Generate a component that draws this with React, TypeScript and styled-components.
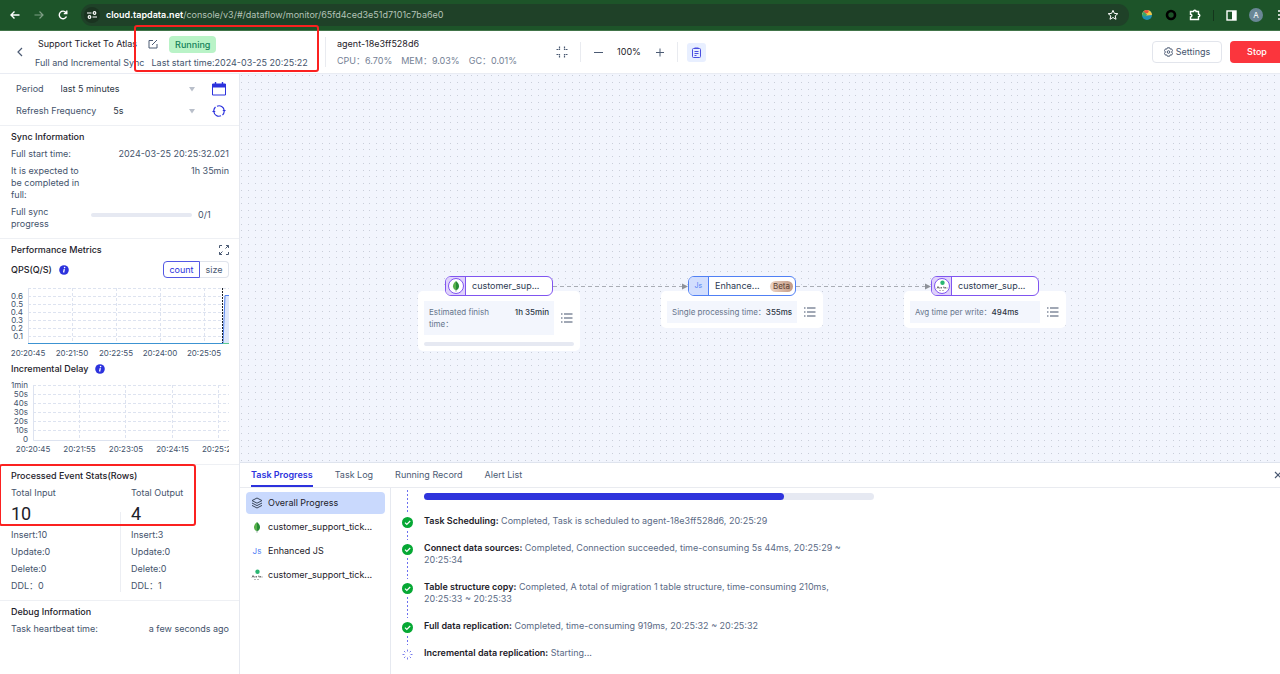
import React from "react";
import styled, { createGlobalStyle, css } from "styled-components";

const Global = createGlobalStyle`
  * { box-sizing: border-box; }
  body { margin: 0; background: #fff; }
  body, button, select, input {
    font-family: Inter, "Noto Sans CJK SC", sans-serif;
    font-size: 9px;
    line-height: 12px;
    color: #44536c;
  }
  button { margin: 0; padding: 0; border: 0; background: none; cursor: pointer; }
  svg { display: block; flex: none; }
  p, h1, h2, h3, ul, ol, dl, dd { margin: 0; padding: 0; list-style: none; font-size: inherit; font-weight: inherit; }
`;

const Page = styled.div`
  position: relative;
  min-height: 100vh;
  display: flex;
  flex-direction: column;
  overflow: hidden;
`;

/* Browser bar */
const BrowserBar = styled.div`
  height: 31px;
  display: flex;
  align-items: center;
  padding-left: 9px;
  background: #1d5429;
  border-bottom: 1px solid #417449;
  color: #fff;
  overflow: hidden;
`;
const NavButtons = styled.div`
  display: flex;
  gap: 12px;
  margin-right: 12px;
`;
const BarButton = styled.button<{ $dim?: boolean }>`
  display: flex;
  color: ${(p) => (p.$dim ? "#7f9f86" : "#fff")};
`;
const AddressBar = styled.div`
  flex: 1;
  height: 22px;
  display: flex;
  align-items: center;
  gap: 6px;
  padding: 0 10px 0 3px;
  border-radius: 11px;
  background: #1f4128;
`;
const SiteButton = styled.button`
  width: 16px;
  height: 16px;
  display: flex;
  align-items: center;
  justify-content: center;
  border-radius: 8px;
  background: #1a3320;
`;
const Url = styled.div`
  flex: 1;
  color: #b4c3b7;
  span { color: #fff; font-weight: 600; }
`;
const BarActions = styled.div`
  display: flex;
  align-items: center;
  gap: 12px;
  margin: 0 -7px 0 12px;
`;
const BarRule = styled.span`
  width: 1px;
  height: 11px;
  background: #14361c;
`;
const Avatar = styled.span`
  width: 14px;
  height: 14px;
  border-radius: 7px;
  background: #6a8796;
  color: #fff;
  font-size: 8px;
  line-height: 14px;
  text-align: center;
`;

/* Task header */
const Header = styled.header`
  height: 43px;
  display: flex;
  align-items: center;
  border-bottom: 1px solid #e9ecf3;
  overflow: hidden;
`;
const BackButton = styled.button`
  width: 35px;
  display: flex;
  padding-left: 16px;
`;
const TaskInfo = styled.div`
  width: 290px;
  flex: none;
  display: flex;
  flex-direction: column;
  gap: 4px;
`;
const TitleRow = styled.div`
  display: flex;
  align-items: center;
  gap: 11px;
  padding-left: 3px;
  color: #1d2129;
`;
const StatusTag = styled.span`
  padding: 2px 6px;
  line-height: 13px;
  border-radius: 4px;
  background: #b9f3c7;
  color: #158259;
  font-weight: 500;
`;
const MetaRow = styled.div`
  display: flex;
  gap: 7px;
  white-space: nowrap;
`;
const Rule = styled.span<{ $tall?: boolean }>`
  width: 1px;
  height: ${(p) => (p.$tall ? 30 : 20)}px;
  background: #e9ebf0;
`;
const Agent = styled.div`
  width: 230px;
  padding-left: 11px;
  display: flex;
  flex-direction: column;
  gap: 5px;
  color: #1d2129;
`;
const AgentStats = styled.div`
  display: flex;
  gap: 9px;
  color: #748195;
`;
const ZoomTools = styled.div`
  display: flex;
  align-items: center;
  gap: 12px;
  color: #1d2129;
`;
const ZoomValue = styled.span`
  width: 28px;
  text-align: center;
`;
const ToolButton = styled.button<{ $active?: boolean }>`
  display: flex;
  align-items: center;
  justify-content: center;
  color: #4b5a73;
  ${(p) => p.$active && css`
    width: 19px;
    height: 19px;
    margin-left: -3px;
    border-radius: 3px;
    background: #e8efff;
    color: #4a4fe0;
  `}
`;
const HeaderActions = styled.div`
  display: flex;
  gap: 8px;
  margin: 0 -4px 0 auto;
`;
const ActionButton = styled.button<{ $danger?: boolean }>`
  height: 22px;
  display: flex;
  align-items: center;
  justify-content: center;
  gap: 3px;
  border-radius: 4px;
  ${(p) => p.$danger
    ? css`width: 54px; background: #fb353d; color: #fff; font-weight: 500;`
    : css`width: 70px; border: 1px solid #e2e5ec;`}
`;

/* Sidebar */
const Body = styled.div`
  flex: 1;
  display: flex;
`;
const Sidebar = styled.aside`
  width: 240px;
  flex: none;
  border-right: 1px solid #e6e9f0;
`;
const Section = styled.section`
  padding: 5px 10px 8px 11px;
  border-top: 1px solid #eef0f4;
`;
const Filters = styled.div`
  display: flex;
  flex-direction: column;
  gap: 8px;
  padding: 8px 13px 7px 16px;
`;
const FilterRow = styled.div`
  display: flex;
  align-items: center;
  height: 14px;
  gap: 17px;
`;
const SelectBox = styled.div`
  flex: 1;
  display: flex;
  align-items: center;
  select {
    flex: 1;
    appearance: none;
    border: 0;
    padding: 0;
    background: none;
    color: #2c3544;
  }
`;
const IconButton = styled.button`
  display: flex;
  color: #2c32dd;
`;
const Heading = styled.h2`
  color: #1d2129;
  font-weight: 500;
`;
const HeadRow = styled.div`
  display: flex;
  align-items: center;
  justify-content: space-between;
`;
const InfoRow = styled.div`
  display: flex;
  justify-content: space-between;
  margin-top: 5px;
`;
const InfoLabel = styled.span<{ $narrow?: boolean }>`
  flex: none;
  width: ${(p) => (p.$narrow ? "74px" : "auto")};
`;
const SyncProgress = styled.div`
  width: 138px;
  height: 12px;
  display: flex;
  align-items: center;
  gap: 6px;
  margin-top: 3px;
`;
const Track = styled.div<{ $w?: number; $h: number }>`
  width: ${(p) => (p.$w ? `${p.$w}px` : "100%")};
  height: ${(p) => p.$h}px;
  border-radius: 4px;
  background: #e6e9f2;
`;
const Fill = styled.div`
  width: 80%;
  height: 100%;
  border-radius: 4px;
  background: #2f34dc;
`;
const ChartHead = styled.div<{ $gap?: boolean }>`
  display: flex;
  align-items: center;
  gap: 7px;
  height: 17px;
  margin-top: ${(p) => (p.$gap ? 5 : 0)}px;
  color: #1d2129;
  font-weight: 500;
`;
const Segmented = styled.div`
  display: flex;
  margin-left: auto;
`;
const Segment = styled.button<{ $on?: boolean }>`
  height: 17px;
  width: ${(p) => (p.$on ? 37 : 29)}px;
  border: 1px solid ${(p) => (p.$on ? "#5358e4" : "#e0e4ec")};
  border-radius: ${(p) => (p.$on ? "4px 0 0 4px" : "0 4px 4px 0")};
  border-left-width: ${(p) => (p.$on ? 1 : 0)}px;
  color: ${(p) => (p.$on ? "#2c32dd" : "#4b5a73")};
`;
const Chart = styled.svg`
  width: 100%;
  font-size: 8px;
  fill: #44536c;
`;
const Stats = styled.div`
  display: grid;
  grid-template-columns: 109px 11px 1fr;
  margin-top: 5px;
`;
const StatColumn = styled.div`
  display: flex;
  flex-direction: column;
  gap: 5px;
`;
const StatTotal = styled.strong`
  font-family: Roboto, sans-serif;
  font-size: 18px;
  line-height: 20px;
  font-weight: 400;
  color: #1d2129;
`;
const StatRule = styled.span`
  width: 1px;
  height: 80px;
  align-self: end;
  background: #eceef3;
`;

/* Canvas */
const Main = styled.main`
  flex: 1;
  min-width: 0;
  display: flex;
  flex-direction: column;
`;
const Canvas = styled.div`
  position: relative;
  flex: 1;
  min-height: 300px;
  background: #f2f5fd;
  overflow: hidden;
`;
const CanvasLayer = styled.svg`
  position: absolute;
  inset: 0;
  width: 100%;
  height: 100%;
`;
const Node = styled.div<{ $x: number }>`
  position: absolute;
  left: ${(p) => p.$x}px;
  top: 202px;
  width: 162px;
  display: flex;
  flex-direction: column;
  align-items: center;
`;
const NodePill = styled.div<{ $blue?: boolean }>`
  position: relative;
  z-index: 1;
  width: 108px;
  height: 20px;
  display: flex;
  align-items: center;
  border: 1px solid ${(p) => (p.$blue ? "#5080f5" : "#8055f0")};
  border-radius: 6px;
  background: #fff;
  overflow: hidden;
`;
const NodeIcon = styled.span<{ $blue?: boolean }>`
  width: 20px;
  height: 100%;
  display: flex;
  align-items: center;
  justify-content: center;
  border-right: 1px solid ${(p) => (p.$blue ? "#5080f5" : "#8055f0")};
  background: ${(p) => (p.$blue ? "#d2defd" : "#dfd2fb")};
`;
const NodeName = styled.span`
  padding-left: 6px;
  flex: 1;
  color: #2c3a52;
`;
const Beta = styled.span`
  margin-right: 2px;
  padding: 0 3px;
  border-radius: 6px;
  font-size: 8px;
  line-height: 11px;
  color: #5c4033;
  background: linear-gradient(90deg, #ecd3c3, #c39a85);
`;
const NodeCard = styled.div`
  width: 100%;
  margin-top: -5px;
  padding: 10px 6px 5px;
  display: flex;
  flex-direction: column;
  gap: 7px;
  border-radius: 5px;
  background: #fff;
`;
const NodeCardRow = styled.div`
  display: flex;
  align-items: center;
  gap: 7px;
`;
const Metric = styled.div<{ $split?: boolean }>`
  width: 130px;
  flex: none;
  padding: 5px;
  display: flex;
  justify-content: ${(p) => (p.$split ? "space-between" : "flex-start")};
  font-size: 8px;
  color: #66758c;
  background: #f3f6fd;
  span {
    width: ${(p) => (p.$split ? "70px" : "auto")};
    white-space: ${(p) => (p.$split ? "normal" : "nowrap")};
  }
  b { white-space: nowrap; font-weight: 500; color: #2c3544; }
`;

/* Bottom panel */
const Panel = styled.section`
  border-top: 1px solid #dfe4ee;
`;
const Tabs = styled.nav`
  display: flex;
  align-items: stretch;
  gap: 22px;
  height: 25px;
  padding-left: 11px;
  border-bottom: 1px solid #e9ebf0;
  overflow: hidden;
`;
const Tab = styled.button<{ $on?: boolean }>`
  padding-top: 2px;
  border-bottom: 2px solid ${(p) => (p.$on ? "#2c32dd" : "transparent")};
  color: ${(p) => (p.$on ? "#2c32dd" : "#4b5a73")};
  font-weight: ${(p) => (p.$on ? 600 : 400)};
`;
const CloseButton = styled.button`
  display: flex;
  align-items: center;
  margin: 0 -2px 0 auto;
`;
const PanelBody = styled.div`
  display: flex;
`;
const StepList = styled.ul`
  width: 151px;
  flex: none;
  display: flex;
  flex-direction: column;
  gap: 2px;
  padding: 4px 5px 4px 6px;
  border-right: 1px solid #e6e9f0;
`;
const StepButton = styled.button<{ $on?: boolean }>`
  width: 100%;
  height: 22px;
  display: flex;
  align-items: center;
  gap: 5px;
  padding-left: 5px;
  border-radius: 4px;
  color: #1d2129;
  background: ${(p) => (p.$on ? "#c9d9fd" : "transparent")};
  white-space: nowrap;
`;
const Timeline = styled.ol`
  flex: 1;
  padding-left: 11px;
`;
const TimelineItem = styled.li`
  display: flex;
  gap: 11px;
  color: #5a6a85;
  b { color: #1d2129; font-weight: 600; }
`;
const Marker = styled.div`
  width: 11px;
  display: flex;
  flex-direction: column;
  align-items: center;
  gap: 3px;
  padding-top: 2px;
  flex: none;
`;
const Dots = styled.span`
  flex: 1;
  width: 1px;
  margin-bottom: 2px;
  background: repeating-linear-gradient(#6c70f0 0 2px, #fff 2px 4px);
`;
const TimelineText = styled.p`
  width: 440px;
  padding-bottom: 15px;
`;
const BarHolder = styled.div`
  width: 450px;
  padding: 5px 0 15px;
`;

/* Red callouts over the page */
const Callout = styled.div<{ $x: number; $y: number; $w: number; $h: number }>`
  position: absolute;
  left: ${(p) => p.$x}px;
  top: ${(p) => p.$y}px;
  width: ${(p) => p.$w}px;
  height: ${(p) => p.$h}px;
  border: 2px solid #fb2120;
  border-radius: 3px;
  pointer-events: none;
  z-index: 5;
`;

const Leaf = () => (
  <svg width="12" height="12" viewBox="0 0 12 12">
    <path d="M6 1C3.600 3 3 4.700 3 6.300 3 8.500 4.500 9.700 6 10.600z" fill="#58b04b" />
    <path d="M6 1c2.400 2 3 3.700 3 5.300 0 2.200-1.500 3.400-3 4.300z" fill="#268b35" />
    <path d="M6 9.500V12" stroke="#9aa" strokeWidth=".7" />
  </svg>
);
const Atlas = () => (
  <svg width="12" height="12" viewBox="0 0 12 12">
    <circle cx="6.500" cy="2.700" r="2.200" fill="#2bb673" />
    <path d="M1 8.500l1-2 1 2M4 7v1.500M5.500 7v1.500M7 7.200h1.300v1.300M9.500 7v1.500M11 7.500v1" stroke="#555" strokeWidth=".8" fill="none" />
    <path d="M3 10.500h6" stroke="#999" strokeWidth=".7" strokeDasharray="2 1" />
  </svg>
);
const RoundIcon = styled.span`
  width: 16px;
  height: 16px;
  display: flex;
  align-items: center;
  justify-content: center;
  border: 1px solid #8055f0;
  border-radius: 8px;
  background: #fff;
`;
const JsMark = styled.span<{ $small?: boolean }>`
  width: ${(p) => (p.$small ? 8 : 12)}px;
  font-size: ${(p) => (p.$small ? 7 : 8)}px;
  color: #5080f5;
`;
const Info = () => (
  <svg width="10" height="10" viewBox="0 0 10 10">
    <circle cx="5" cy="5" r="4.800" fill="#2c32dd" />
    <path d="M5.300 4.200L4.600 7.500" stroke="#fff" strokeWidth="1.300" />
    <circle cx="5.600" cy="2.600" r=".8" fill="#fff" />
  </svg>
);
const Caret = () => (
  <svg width="6" height="5" viewBox="0 0 6 5"><path d="M0 0h6L3 4.500z" fill="#b9bfca" /></svg>
);
const ListIcon = () => (
  <svg width="12" height="10" viewBox="0 0 12 10" stroke="#44536c" strokeWidth="1.200">
    <path d="M0 1h1.500M3 1h8.500M0 5h1.500M3 5h8.500M0 9h1.500M3 9h8.500" />
  </svg>
);
const Check = () => (
  <svg width="11" height="11" viewBox="0 0 11 11">
    <circle cx="5.500" cy="5.500" r="5.500" fill="#06a834" />
    <path d="M3 5.600l1.800 1.800L8.200 4" fill="none" stroke="#fff" strokeWidth="1.200" />
  </svg>
);
const Spinner = () => (
  <svg width="11" height="11" viewBox="0 0 11 11" stroke="#7a7eec" strokeWidth="1">
    <path d="M5.500 .5v2M5.500 8.500v2M.5 5.500h2M8.500 5.500h2M2 2l1.300 1.300M7.700 7.700L9 9M9 2L7.700 3.300M3.300 7.700L2 9" />
  </svg>
);

const qpsTicks = ["0.6", "0.5", "0.4", "0.3", "0.2", "0.1"];
const qpsTimes = ["20:20:45", "20:21:50", "20:22:55", "20:24:00", "20:25:05"];
const delayTicks = ["1min", "50s", "40s", "30s", "20s", "10s", "0"];
const delayTimes = ["20:20:45", "20:21:55", "20:23:05", "20:24:15", "20:25:25"];

const QpsChart = () => (
  <Chart height="82" role="img" aria-label="QPS">
    <g stroke="#dde3f0" strokeDasharray="3 2">
      <path d="M17 10.500H218" />
      {qpsTicks.map((t, i) => <path key={t} d={`M17 ${18.5 + i * 8}H218`} />)}
      {[1, 2, 3, 4].map((i) => <path key={i} d={`M${17.5 + i * 44} 10V65`} />)}
    </g>
    <path d="M17.500 10V65" stroke="#dde3f0" />
    <path d="M212 65L214 17.500H218V65z" fill="#dfe8fc" />
    <path d="M212 65L214 17.500H218" fill="none" stroke="#4f80ee" />
    <path d="M17 65.500H212" stroke="#3c93d2" />
    <path d="M212 65.500H218" stroke="#5ccb92" />
    <path d="M211.500 10V65" stroke="#1d2129" strokeDasharray="2 1" />
    {qpsTicks.map((t, i) => <text key={t} x="12" y={21 + i * 8} textAnchor="end">{t}</text>)}
    {qpsTimes.map((t, i) => <text key={t} x={17 + i * 44} y="78" textAnchor="middle">{t}</text>)}
  </Chart>
);
const DelayChart = () => (
  <Chart height="79" role="img" aria-label="Incremental delay">
    <g stroke="#dde3f0" strokeDasharray="3 2">
      {delayTicks.slice(0, 6).map((t, i) => <path key={t} d={`M22 ${8.5 + i * 9}H218`} />)}
      {[68.5, 114.5, 161.5, 207.5].map((x) => <path key={x} d={`M${x} 8V63`} />)}
    </g>
    <path d="M22.500 8V63.500H218" fill="none" stroke="#dde3f0" />
    {delayTicks.map((t, i) => <text key={t} x="17" y={11 + i * 9} textAnchor="end">{t}</text>)}
    {delayTimes.map((t, i) => <text key={t} x={22 + i * 46.5} y="75" textAnchor="middle">{t}</text>)}
  </Chart>
);

const stats = [
  { title: "Total Input", total: "10", rows: ["Insert:10", "Update:0", "Delete:0", "DDL：0"] },
  { title: "Total Output", total: "4", rows: ["Insert:3", "Update:0", "Delete:0", "DDL：1"] },
];
const steps = [
  { title: "Task Scheduling:", text: "Completed, Task is scheduled to agent-18e3ff528d6, 20:25:29" },
  { title: "Connect data sources:", text: "Completed, Connection succeeded, time-consuming 5s 44ms, 20:25:29 ~ 20:25:34" },
  { title: "Table structure copy:", text: "Completed, A total of migration 1 table structure, time-consuming 210ms, 20:25:33 ~ 20:25:33" },
  { title: "Full data replication:", text: "Completed, time-consuming 919ms, 20:25:32 ~ 20:25:32" },
];

export default function App() {
  return (
    <Page>
      <Global />
      <BrowserBar>
        <NavButtons>
          <BarButton aria-label="Back">
            <svg width="12" height="12" viewBox="0 0 12 12" fill="none" stroke="currentColor" strokeWidth="1.400"><path d="M10.500 6H2M5.500 2.500L2 6l3.500 3.500" /></svg>
          </BarButton>
          <BarButton $dim aria-label="Forward">
            <svg width="12" height="12" viewBox="0 0 12 12" fill="none" stroke="currentColor" strokeWidth="1.200"><path d="M1.500 6H10M6.500 2.500L10 6 6.500 9.500" /></svg>
          </BarButton>
          <BarButton aria-label="Reload">
            <svg width="12" height="12" viewBox="0 0 12 12" fill="none" stroke="currentColor" strokeWidth="1.400"><path d="M9.500 7.500A3.800 3.800 0 1 1 9 3.500M9.800 1.500V4.500H6.800" /></svg>
          </BarButton>
        </NavButtons>
        <AddressBar>
          <SiteButton aria-label="Site information">
            <svg width="10" height="8" viewBox="0 0 10 8" fill="none" stroke="#fff" strokeWidth="1.200"><path d="M0 2h4.500M5.500 6H10" /><circle cx="7.500" cy="2" r="1.300" /><circle cx="2.500" cy="6" r="1.300" /></svg>
          </SiteButton>
          <Url><span>cloud.tapdata.net</span>/console/v3/#/dataflow/monitor/65fd4ced3e51d7101c7ba6e0</Url>
          <BarButton aria-label="Bookmark">
            <svg width="12" height="12" viewBox="0 0 12 12" fill="none" stroke="currentColor"><path d="M6 1.300l1.400 3.100 3.400.3-2.600 2.200.8 3.400L6 8.500l-3 1.800.8-3.400L1.200 4.700l3.400-.3z" /></svg>
          </BarButton>
        </AddressBar>
        <BarActions>
          <svg width="12" height="12" viewBox="0 0 12 12"><circle cx="6" cy="6" r="5" fill="#1f8fb3" /><path d="M1 6a5 5 0 0 1 10 0L6 6.500z" fill="#f2c744" /><path d="M2.500 2.400A5 5 0 0 1 8 1.400L7 4 4 4.500z" fill="#e8553c" /><path d="M1 6l1.500-3.600L6 5.500 4 8z" fill="#3aa66a" /></svg>
          <svg width="12" height="12" viewBox="0 0 12 12"><circle cx="6" cy="6" r="4" fill="none" stroke="#000" strokeWidth="2.600" /></svg>
          <BarButton aria-label="Extensions">
            <svg width="12" height="12" viewBox="0 0 12 12" fill="none" stroke="currentColor" strokeWidth="1.400"><path d="M1.500 2.500h3a1.300 1.300 0 0 1 2.600 0h2.400v2.700a1.300 1.300 0 0 1 0 2.600v2.700h-8V8a1.400 1.400 0 0 0 0-2.800z" /></svg>
          </BarButton>
          <BarRule />
          <BarButton aria-label="Side panel">
            <svg width="11" height="11" viewBox="0 0 11 11"><rect x="1" y="1" width="9" height="9" fill="none" stroke="#fff" strokeWidth="1.400" /><path d="M6 1h4v9H6z" fill="#fff" /></svg>
          </BarButton>
          <Avatar>A</Avatar>
          <BarButton aria-label="Menu">
            <svg width="12" height="12" viewBox="0 0 12 12" fill="currentColor"><circle cx="4" cy="2" r="1" /><circle cx="4" cy="6" r="1" /><circle cx="4" cy="10" r="1" /></svg>
          </BarButton>
        </BarActions>
      </BrowserBar>

      <Header>
        <BackButton aria-label="Go back">
          <svg width="8" height="10" viewBox="0 0 8 10" fill="none" stroke="#4b5a73" strokeWidth="1.200"><path d="M6 1L2 5l4 4" /></svg>
        </BackButton>
        <TaskInfo>
          <TitleRow>
            <h1>Support Ticket To Atlas</h1>
            <IconButton aria-label="Rename">
              <svg width="10" height="10" viewBox="0 0 10 10" fill="none" stroke="#4b5a73"><path d="M5 1.500H1v7.500h8V5M4 6l5-5" /></svg>
            </IconButton>
            <StatusTag>Running</StatusTag>
          </TitleRow>
          <MetaRow><span>Full and Incremental Sync</span><span>Last start time:2024-03-25 20:25:22</span></MetaRow>
        </TaskInfo>
        <Rule $tall />
        <Agent>
          <span>agent-18e3ff528d6</span>
          <AgentStats><span>CPU：6.70%</span><span>MEM：9.03%</span><span>GC：0.01%</span></AgentStats>
        </Agent>
        <ZoomTools>
          <ToolButton aria-label="Fit to screen">
            <svg width="12" height="12" viewBox="0 0 12 12" fill="none" stroke="currentColor" strokeWidth="1.200"><path d="M.5 3.500H2M3.500 .5V2M3.500 2.500v1H2.500M11.500 3.500H10M8.500 .5V2M8.500 2.500v1h1M11.500 8.500H10M8.500 11.500V10M8.500 9.500v-1h1M.5 8.500H2M3.500 11.500V10M3.500 9.500v-1h-1" /></svg>
          </ToolButton>
          <Rule />
          <ToolButton aria-label="Zoom out"><svg width="10" height="10" viewBox="0 0 10 10" stroke="currentColor"><path d="M1 5.500h9" /></svg></ToolButton>
          <ZoomValue>100%</ZoomValue>
          <ToolButton aria-label="Zoom in"><svg width="10" height="10" viewBox="0 0 10 10" stroke="currentColor"><path d="M1 5.500h8M5 1.500v8" /></svg></ToolButton>
          <Rule />
          <ToolButton $active aria-label="Task details">
            <svg width="11" height="11" viewBox="0 0 11 11" fill="none" stroke="currentColor"><rect x="1.500" y="1.500" width="8" height="9" rx="1" /><path d="M3.500 1h4M3.500 4.500h4M3.500 6.500h4M3.500 8.500h2" /></svg>
          </ToolButton>
        </ZoomTools>
        <HeaderActions>
          <ActionButton>
            <svg width="9" height="10" viewBox="0 0 9 10" fill="none" stroke="#4b5a73"><path d="M3.300.8h2.400l.5 1.300 1.400-.2.900 1.700L7.600 5l.9 1.400-.9 1.700-1.400-.2-.5 1.300H3.300l-.5-1.300-1.400.2L.5 6.400 1.400 5 .5 3.600l.9-1.700 1.400.2z" /><circle cx="4.500" cy="5" r="1.300" /></svg>
            Settings
          </ActionButton>
          <ActionButton $danger>Stop</ActionButton>
        </HeaderActions>
      </Header>

      <Body>
        <Sidebar>
          <Filters>
            <FilterRow>
              <label htmlFor="period">Period</label>
              <SelectBox><select id="period"><option>last 5 minutes</option></select><Caret /></SelectBox>
              <IconButton aria-label="Pick dates">
                <svg width="14" height="14" viewBox="0 0 14 14"><path d="M.5 2h13v11h-13z" fill="none" stroke="currentColor" /><path d="M.5 2h13v3.500H.5z" fill="currentColor" /><path d="M3.500 0v3M10.500 0v3" stroke="currentColor" strokeWidth="1.400" /></svg>
              </IconButton>
            </FilterRow>
            <FilterRow>
              <label htmlFor="frequency">Refresh Frequency</label>
              <SelectBox><select id="frequency"><option>5s</option></select><Caret /></SelectBox>
              <IconButton aria-label="Refresh">
                <svg width="14" height="14" viewBox="0 0 14 14" fill="none" stroke="currentColor" strokeWidth="1.200"><path d="M5 2.200a5.200 5.200 0 0 1 7.200 4.300M9 11.800A5.200 5.200 0 0 1 1.800 7.500M1.800 6.500A5.200 5.200 0 0 1 3.500 3M12.200 7.500A5.200 5.200 0 0 1 10.500 11" /><path d="M10.300 6H14l-1.800 2zM0 8h3.700L1.800 6z" fill="currentColor" stroke="none" /></svg>
              </IconButton>
            </FilterRow>
          </Filters>

          <Section>
            <Heading>Sync Information</Heading>
            <InfoRow><InfoLabel>Full start time:</InfoLabel><span>2024-03-25 20:25:32.021</span></InfoRow>
            <InfoRow><InfoLabel $narrow>It is expected to be completed in full:</InfoLabel><span>1h 35min</span></InfoRow>
            <InfoRow>
              <InfoLabel $narrow>Full sync progress</InfoLabel>
              <SyncProgress><Track $w={101} $h={4} />0/1</SyncProgress>
            </InfoRow>
          </Section>

          <Section>
            <HeadRow>
              <Heading>Performance Metrics</Heading>
              <IconButton aria-label="Expand">
                <svg width="10" height="10" viewBox="0 0 10 10" fill="none" stroke="#4b5a73"><path d="M.5 3V.5H3M7 .5h2.500V3M9.500 7v2.500H7M3 9.500H.5V7M6.500 3.500l3-3M3.500 6.500l-3 3" /></svg>
              </IconButton>
            </HeadRow>
            <ChartHead $gap>
              QPS(Q/S) <Info />
              <Segmented><Segment $on>count</Segment><Segment>size</Segment></Segmented>
            </ChartHead>
            <QpsChart />
            <ChartHead>Incremental Delay <Info /></ChartHead>
            <DelayChart />
          </Section>

          <Section>
            <Heading>Processed Event Stats(Rows)</Heading>
            <Stats>
              {stats.map((s, i) => (
                <React.Fragment key={s.title}>
                  {i > 0 && <StatRule />}
                  <StatColumn>
                    <span>{s.title}</span>
                    <StatTotal>{s.total}</StatTotal>
                    {s.rows.map((r) => <span key={r}>{r}</span>)}
                  </StatColumn>
                </React.Fragment>
              ))}
            </Stats>
          </Section>

          <Section>
            <Heading>Debug Information</Heading>
            <InfoRow><span>Task heartbeat time:</span><span>a few seconds ago</span></InfoRow>
          </Section>
        </Sidebar>

        <Main>
          <Canvas>
            <CanvasLayer>
              <defs>
                <pattern id="dots" width="27" height="27" patternUnits="userSpaceOnUse">
                  {[1, 8, 15, 21].map((y) => [1, 8, 15, 21].map((x) => <rect key={`${x}-${y}`} x={x} y={y} width="1" height="1" fill="#c9ced9" />))}
                </pattern>
              </defs>
              <rect width="100%" height="100%" fill="url(#dots)" />
              <g stroke="#a9adb5" strokeDasharray="4 3"><path d="M313 212.500H443M556 212.500H686" /></g>
              <path d="M442 209.500l6 3-6 3zM685 209.500l6 3-6 3z" fill="#8e9299" />
            </CanvasLayer>
            <Node $x={178}>
              <NodePill><NodeIcon><RoundIcon><Leaf /></RoundIcon></NodeIcon><NodeName>customer_sup...</NodeName></NodePill>
              <NodeCard>
                <NodeCardRow><Metric $split><span>Estimated finish time：</span><b>1h 35min</b></Metric><ListIcon /></NodeCardRow>
                <Track $h={4} />
              </NodeCard>
            </Node>
            <Node $x={421}>
              <NodePill $blue><NodeIcon $blue><JsMark $small>Js</JsMark></NodeIcon><NodeName>Enhance...</NodeName><Beta>Beta</Beta></NodePill>
              <NodeCard><NodeCardRow><Metric><span>Single processing time：</span><b>355ms</b></Metric><ListIcon /></NodeCardRow></NodeCard>
            </Node>
            <Node $x={664}>
              <NodePill><NodeIcon><RoundIcon><Atlas /></RoundIcon></NodeIcon><NodeName>customer_sup...</NodeName></NodePill>
              <NodeCard><NodeCardRow><Metric><span>Avg time per write：</span><b>494ms</b></Metric><ListIcon /></NodeCardRow></NodeCard>
            </Node>
          </Canvas>

          <Panel>
            <Tabs>
              <Tab $on>Task Progress</Tab>
              <Tab>Task Log</Tab>
              <Tab>Running Record</Tab>
              <Tab>Alert List</Tab>
              <CloseButton aria-label="Close panel">
                <svg width="8" height="8" viewBox="0 0 8 8" stroke="#4b5a73" strokeWidth="1.200"><path d="M1 1l6 6M7 1L1 7" /></svg>
              </CloseButton>
            </Tabs>
            <PanelBody>
              <StepList>
                <li><StepButton $on>
                  <svg width="12" height="12" viewBox="0 0 12 12" fill="none" stroke="#3a475c"><path d="M6 1l5 2.600-5 2.600-5-2.600zM1 6l5 2.600L11 6M1 8.400L6 11l5-2.600" /></svg>
                  Overall Progress
                </StepButton></li>
                <li><StepButton><Leaf />customer_support_tick...</StepButton></li>
                <li><StepButton><JsMark>Js</JsMark>Enhanced JS</StepButton></li>
                <li><StepButton><Atlas />customer_support_tick...</StepButton></li>
              </StepList>
              <Timeline>
                <TimelineItem><Marker><Dots /></Marker><BarHolder><Track $h={7}><Fill /></Track></BarHolder></TimelineItem>
                {steps.map((s) => (
                  <TimelineItem key={s.title}>
                    <Marker><Check /><Dots /></Marker>
                    <TimelineText><b>{s.title}</b> {s.text}</TimelineText>
                  </TimelineItem>
                ))}
                <TimelineItem><Marker><Spinner /></Marker><TimelineText><b>Incremental data replication:</b> Starting...</TimelineText></TimelineItem>
              </Timeline>
            </PanelBody>
          </Panel>
        </Main>
      </Body>

      <Callout $x={134} $y={25} $w={185} $h={47} />
      <Callout $x={-1} $y={464} $w={197} $h={62} />
    </Page>
  );
}
